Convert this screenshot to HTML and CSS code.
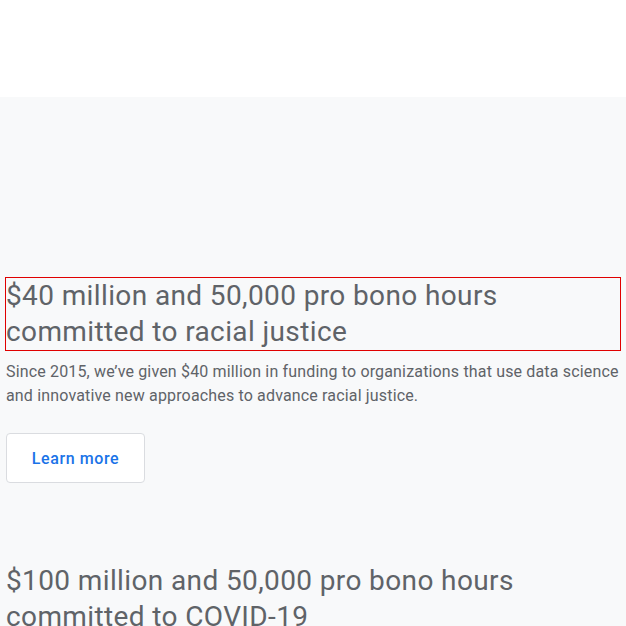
FILE: index.html
```html
<!DOCTYPE html>
<html lang="en">
<head>
<meta charset="utf-8">
<link rel="stylesheet" href="styles.css">
</head>
<body>
<header class="top"></header>
<main class="section">
  <article class="item">
    <h2 class="item-title">$40 million and 50,000 pro bono hours committed to racial justice</h2>
    <p class="item-text">Since 2015, we’ve given $40 million in funding to organizations that use data science and innovative new approaches to advance racial justice.</p>
    <a class="btn" href="#">Learn more</a>
  </article>
  <article class="item item-next">
    <h2 class="item-title plain">$100 million and 50,000 pro bono hours committed to COVID-19</h2>
  </article>
</main>
</body>
</html>
```
FILE: styles.css
```css
html, body {
  margin: 0;
  padding: 0;
  background: #f8f9fa;
  font-family: Roboto, "Open Sans", Arial, sans-serif;
  color: #5f6368;
  overflow: hidden;
  height: 626px;
}
.top {
  height: 97px;
  background: #ffffff;
}
.section {
  padding: 181px 6px 0 6px;
}
.item-title {
  margin: 0;
  font-size: 28px;
  line-height: 36px;
  font-weight: 400;
  letter-spacing: 0.38px;
  color: #5f6368;
  outline: 1px solid #e00000;
  width: 614px;
}
.item-title.plain {
  outline: none;
}
.item-text {
  margin: 10px 0 0 0;
  font-size: 16px;
  line-height: 24px;
  letter-spacing: 0.16px;
  color: #5f6368;
}
.btn {
  display: inline-flex;
  align-items: center;
  justify-content: center;
  box-sizing: border-box;
  margin-top: 25px;
  width: 139px;
  height: 50px;
  background: #ffffff;
  border: 1px solid #dadce0;
  border-radius: 4px;
  color: #1a73e8;
  font-size: 16px;
  font-weight: 500;
  letter-spacing: 0.6px;
  text-decoration: none;
}
.item-next {
  margin-top: 80px;
}
```
